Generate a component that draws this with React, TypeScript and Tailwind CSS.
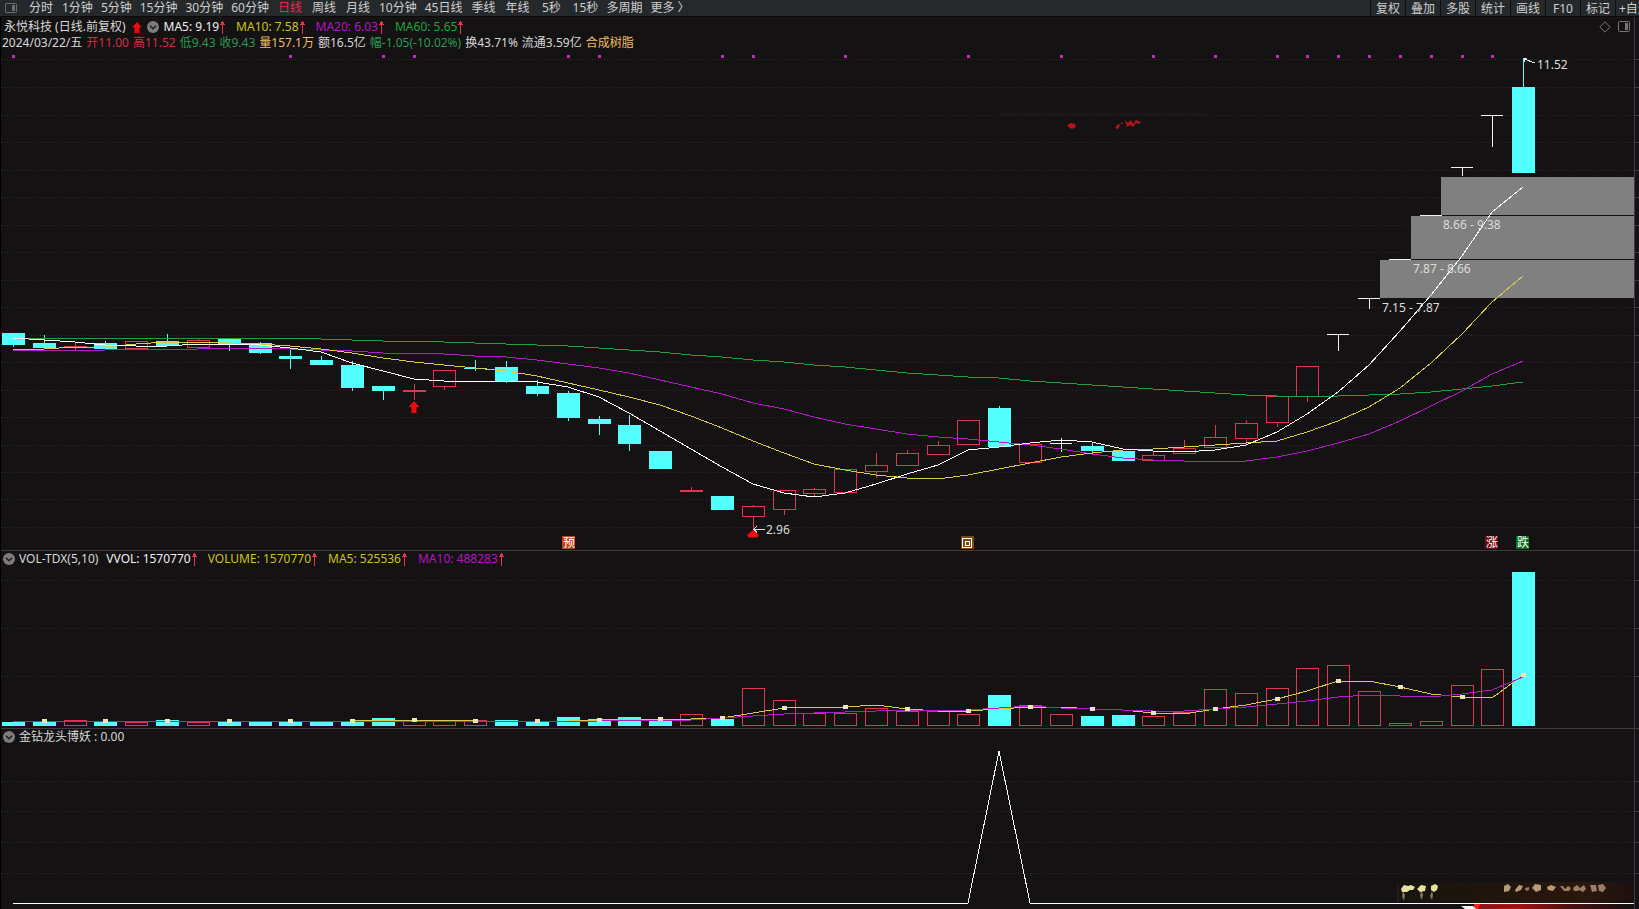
import React from 'react';
import clsx from 'clsx';

const PERIODS = [
  '分时', '1分钟', '5分钟', '15分钟', '30分钟', '60分钟', '日线', '周线', '月线',
  '10分钟', '45日线', '季线', '年线', '5秒', '15秒', '多周期', '更多 〉',
];

const TOOLS = ['复权', '叠加', '多股', '统计', '画线', 'F10', '标记'];

const QUOTE = [
  { text: '2024/03/22/五', color: 'text-[#d8d8d8]' },
  { text: '开11.00', color: 'text-[#d32f42]' },
  { text: '高11.52', color: 'text-[#d32f42]' },
  { text: '低9.43', color: 'text-[#2b9a52]' },
  { text: '收9.43', color: 'text-[#2b9a52]' },
  { text: '量157.1万', color: 'text-[#f0bd62]' },
  { text: '额16.5亿', color: 'text-[#d8d8d8]' },
  { text: '幅-1.05(-10.02%)', color: 'text-[#2b9a52]' },
  { text: '换43.71%', color: 'text-[#d8d8d8]' },
  { text: '流通3.59亿', color: 'text-[#d8d8d8]' },
  { text: '合成树脂', color: 'text-[#f0bd62]' },
];

const PRICE_MA = [
  { text: 'MA5: 9.19', color: 'text-[#f0f0f0]' },
  { text: 'MA10: 7.58', color: 'text-[#cdc31f]' },
  { text: 'MA20: 6.03', color: 'text-[#b514c2]' },
  { text: 'MA60: 5.65', color: 'text-[#1fa437]' },
];

const VOLUME_MA = [
  { text: 'VVOL: 1570770', color: 'text-[#f0f0f0]' },
  { text: 'VOLUME: 1570770', color: 'text-[#cdc31f]' },
  { text: 'MA5: 525536', color: 'text-[#cdc31f]' },
  { text: 'MA10: 488283', color: 'text-[#b514c2]' },
];

const CYAN = '#54ffff';
const RED = '#e0364f';
const WHITE = '#f2f2f2';
const YELLOW = '#d8cb4a';
const PURPLE = '#b41cc6';
const GREEN = '#22a03c';

// d = down (filled), u = up (hollow), c = flat cross, w = white flat, g = cyan flat
type Kind = 'd' | 'u' | 'c' | 'w' | 'g';
// kind, body top, body bottom, wick top, wick bottom, volume top
type Candle = [Kind, number, number, number, number, number];

const CANDLES: Candle[] = [
  ['d', 333, 345, 333, 347, 722],
  ['d', 343, 348, 335, 348, 722],
  ['c', 346, 347, 343, 350, 720],
  ['d', 343, 349, 341, 350, 722],
  ['u', 341, 349, 341, 349, 722],
  ['d', 341, 346, 334, 346, 720],
  ['u', 340, 348, 338, 348, 722],
  ['d', 338, 344, 338, 351, 722],
  ['d', 343, 353, 342, 354, 722],
  ['d', 356, 359, 349, 369, 721],
  ['d', 360, 365, 356, 365, 722],
  ['d', 365, 388, 361, 391, 721],
  ['d', 386, 391, 386, 400, 718],
  ['c', 390, 392, 384, 400, 721],
  ['u', 370, 387, 370, 390, 721],
  ['g', 368, 369, 360, 371, 720],
  ['d', 367, 382, 361, 383, 720],
  ['d', 386, 394, 380, 396, 722],
  ['d', 393, 418, 391, 421, 717],
  ['d', 419, 424, 416, 435, 719],
  ['d', 425, 444, 415, 451, 717],
  ['d', 451, 469, 451, 469, 719],
  ['c', 490, 492, 487, 492, 714],
  ['d', 496, 510, 496, 510, 719],
  ['u', 506, 517, 505, 530, 688],
  ['u', 490, 510, 490, 515, 700],
  ['u', 489, 494, 488, 497, 713],
  ['u', 469, 493, 469, 493, 713],
  ['u', 465, 472, 453, 478, 708],
  ['u', 453, 466, 450, 466, 711],
  ['u', 445, 455, 441, 455, 711],
  ['u', 420, 445, 420, 445, 714],
  ['d', 408, 447, 406, 447, 695],
  ['u', 444, 463, 444, 463, 705],
  ['w', 443, 444, 438, 452, 714],
  ['d', 446, 451, 443, 454, 716],
  ['d', 451, 461, 451, 461, 715],
  ['u', 455, 461, 452, 461, 716],
  ['u', 448, 454, 440, 454, 712],
  ['u', 437, 448, 425, 448, 689],
  ['u', 423, 439, 420, 445, 693],
  ['u', 396, 423, 396, 427, 688],
  ['u', 366, 397, 366, 402, 668],
  ['w', 334, 335, 334, 351, 665],
  ['w', 298, 299, 298, 309, 691],
  ['w', 259, 260, 259, 260, 723],
  ['w', 215, 216, 215, 216, 721],
  ['w', 167, 168, 167, 176, 685],
  ['w', 115, 116, 115, 147, 669],
  ['d', 87, 173, 58, 173, 572],
];

const MA5 = [
  338, 340, 342, 345, 346, 346, 344, 344, 345, 348, 352, 363, 371, 379, 381, 382, 381, 382, 387, 397,
  413, 431, 449, 467, 484, 493, 497, 493, 484, 474, 465, 450, 447, 443, 440, 442, 449, 451, 452, 450,
  445, 432, 414, 392, 365, 331, 295, 256, 212, 187,
];
const MA10 = [
  350, 349, 347, 347, 344, 342, 342, 343, 344, 346, 349, 353, 358, 362, 365, 368, 371, 376, 383, 390,
  397, 405, 416, 428, 441, 453, 464, 470, 475, 478, 479, 475, 469, 463, 457, 453, 450, 449, 447, 445,
  443, 441, 432, 421, 407, 388, 363, 334, 302, 276,
];
const MA20 = [
  350, 350, 350, 350, 349, 349, 349, 348, 348, 349, 350, 351, 353, 353, 354, 356, 357, 360, 364, 368,
  373, 380, 387, 394, 403, 409, 417, 424, 429, 434, 437, 439, 442, 445, 449, 454, 458, 460, 461, 462,
  461, 457, 451, 443, 434, 421, 406, 391, 374, 361,
];
const MA60 = [
  338, 338, 338, 338, 338, 338, 338, 338, 338, 338, 339, 340, 341, 341, 342, 343, 344, 345, 346, 348,
  350, 352, 355, 357, 360, 362, 365, 367, 370, 373, 375, 377, 378, 381, 383, 385, 387, 389, 391, 393,
  395, 396, 396, 396, 395, 394, 392, 389, 386, 382,
];
const VOL5 = [
  721, 721, 721, 721, 721, 721, 721, 721, 721, 721, 721, 721, 720, 720, 720, 721, 721, 721, 721, 720,
  719, 719, 719, 718, 713, 708, 707, 707, 705, 709, 711, 711, 709, 707, 707, 709, 710, 713, 714, 709,
  705, 699, 691, 681, 681, 687, 694, 697, 698, 675,
];
const VOL10 = [
  721, 721, 721, 721, 721, 721, 721, 721, 721, 721, 721, 721, 721, 721, 721, 721, 721, 721, 721, 721,
  720, 720, 720, 718, 716, 714, 713, 712, 711, 710, 710, 710, 708, 706, 708, 709, 710, 711, 711, 709,
  707, 704, 701, 697, 695, 696, 697, 694, 690, 677,
];

const EVENT_DAYS = [0, 9, 12, 13, 18, 19, 23, 24, 27, 31, 34, 37, 39, 41, 42, 43, 44, 45, 46, 47, 48];

const PRICE_GRID = [59, 87, 115, 142, 170, 197, 225, 252, 280, 307, 335, 362, 390, 417, 445, 472, 499, 527];
const VOLUME_GRID = [580, 628, 676];
const SIGNAL_GRID = [781, 811, 842, 873];

const ZONES = [
  { x: 1380, y: 260, h: 38, label: '7.15 - 7.87' },
  { x: 1411, y: 216, h: 43, label: '7.87 - 8.66' },
  { x: 1441, y: 177, h: 38, label: '8.66 - 9.38' },
];

const BADGES = [
  { x: 562, text: '预', fill: '#b34a1a' },
  { x: 1485, text: '涨', fill: '#6e0c12' },
  { x: 1516, text: '跌', fill: '#0b6e1c' },
];

const px = (i: number) => Math.round(13 + i * 30.82);
const toPoints = (ys: number[]) => ys.map((y, i) => `${px(i)},${y}`).join(' ');

const UpArrow = () => (
  <svg viewBox="0 0 7 14" className="h-[14px] w-[7px] shrink-0" fill={RED} aria-hidden="true">
    <path d="M3 1h1v13H3zM2 2h3v2H2zM1 4h5v1H1z" shapeRendering="crispEdges" />
  </svg>
);

const CollapseButton: React.FC<{ label: string }> = ({ label }) => (
  <button type="button" aria-label={label} className="shrink-0">
    <svg viewBox="0 0 12 12" className="block h-3 w-3">
      <circle cx="6" cy="6" r="6" fill="#7c7c7c" />
      <path d="M3 4.8 6 7.8 9 4.8" fill="none" stroke="#1c1c1c" strokeWidth="1.4" />
    </svg>
  </button>
);

const Values: React.FC<{ items: { text: string; color: string }[] }> = ({ items }) => (
  <div className="flex items-center gap-[10px]">
    {items.map((item) => (
      <span key={item.text} className={clsx('flex items-center', item.color)}>
        {item.text}
        <UpArrow />
      </span>
    ))}
  </div>
);

const Grid: React.FC<{ rows: number[] }> = ({ rows }) => (
  <g stroke="#2b2a2c" strokeDasharray="1 2">
    {rows.map((y) => (
      <line key={y} x1="1" x2="1634" y1={y + 0.5} y2={y + 0.5} />
    ))}
  </g>
);

const Line: React.FC<{ ys: number[]; color: string }> = ({ ys, color }) => (
  <polyline points={toPoints(ys)} fill="none" stroke={color} />
);

const CandleMark: React.FC<{ x: number; candle: Candle }> = ({ x, candle }) => {
  const [kind, top, bottom, high, low] = candle;
  if (kind === 'u') {
    return (
      <g fill="none" stroke={RED}>
        <rect x={x - 10.5} y={top + 0.5} width="22" height={bottom - top - 1} />
        <path d={`M${x + 0.5} ${high}V${top}M${x + 0.5} ${bottom}V${low}`} />
      </g>
    );
  }
  const fill = kind === 'c' ? RED : kind === 'w' ? WHITE : CYAN;
  return (
    <g fill={fill}>
      <rect x={x - 11} y={top} width={kind === 'w' ? 22 : 23} height={bottom - top} />
      <rect x={x} y={high} width="1" height={low - high} />
    </g>
  );
};

const PriceChart = () => (
  <svg viewBox="1 50 1633 500" className="block h-auto w-full" shapeRendering="crispEdges" fontSize="12">
    <Grid rows={PRICE_GRID} />
    {EVENT_DAYS.map((i) => (
      <rect key={i} x={px(i) - 1} y="55" width="3" height="3" fill="#c02cc0" />
    ))}

    {ZONES.map((zone) => (
      <rect key={zone.label} x={zone.x} y={zone.y} width={1634 - zone.x} height={zone.h} fill="#808080" />
    ))}

    {CANDLES.map((candle, i) => (
      <CandleMark key={i} x={px(i)} candle={candle} />
    ))}
    <Line ys={MA60} color={GREEN} />
    <Line ys={MA20} color={PURPLE} />
    <Line ys={MA10} color={YELLOW} />
    <Line ys={MA5} color="#ffffff" />

    <g fill="#dcdcdc">
      {ZONES.map((zone) => (
        <text key={zone.label} x={zone.x + 2} y={zone.y + zone.h + 14}>
          {zone.label}
        </text>
      ))}
      <text x="1537" y="69">11.52</text>
      <text x="766" y="534">2.96</text>
    </g>
    <path d="M1524 62V58h3M1524 59l11 4" fill="none" stroke="#d8e8e8" />
    <path d="M754 529.500h11M757 526l-3 3.500 3 3" fill="none" stroke="#dcdcdc" />

    {/* buy signals */}
    <g fill="#f00a0a" shapeRendering="auto">
      <path d="M414 401l5.500 6H416.500v6h-5v-6H408.500z" />
      <path d="M753 530l6 5-1.500 2.500h-9L747 535z" />
    </g>

    {BADGES.map((badge) => (
      <g key={badge.text}>
        <rect x={badge.x} y="536" width="13" height="13" fill={badge.fill} />
        <text x={badge.x + 1} y="547" fill="#ffffff" fontSize="12">
          {badge.text}
        </text>
      </g>
    ))}
    <rect x="961" y="536" width="13" height="13" fill="#7a4a12" />
    <g fill="none" stroke="#ffffff">
      <rect x="962.500" y="538.500" width="9" height="9" />
      <rect x="965.500" y="541.500" width="4" height="4" />
    </g>

    <g shapeRendering="auto">
      <path d="M1000 113.500H1206" stroke="#1e1c1e" />
      <path d="M1067 126l3-3 5 1 1 3-4 2zM1115 128l3-4 2 1-2 4zM1120 124l2-2 1 2zM1125 120l3 3 3-3 2 4 3-4 5 2-2 2-3-1-3 4-3-2-3 2z" fill="#b51420" />
    </g>
  </svg>
);

const VolumeChart = () => (
  <svg viewBox="1 567 1633 161" className="block h-auto w-full" shapeRendering="crispEdges">
    <Grid rows={VOLUME_GRID} />
    {CANDLES.map(([kind, , , , , top], i) =>
      kind === 'd' ? (
        <rect key={i} x={px(i) - 11} y={top} width="23" height={726 - top} fill={CYAN} />
      ) : (
        <rect key={i} x={px(i) - 10.5} y={top + 0.5} width="22" height={725 - top} fill="none" stroke={RED} />
      ),
    )}
    <Line ys={VOL5} color={YELLOW} />
    <Line ys={VOL10} color={PURPLE} />
    {VOL5.map((y, i) =>
      i % 2 === 1 ? <rect key={i} x={px(i) - 2} y={y - 2} width="5" height="4" fill="#eee6c0" /> : null,
    )}
  </svg>
);

const SignalChart = () => (
  <svg viewBox="1 745 1633 164" className="block h-auto w-full" shapeRendering="crispEdges">
    <defs>
      <linearGradient id="ticker">
        <stop offset="0" stopColor="#17140f" />
        <stop offset="0.3" stopColor="#1d150d" />
        <stop offset="0.8" stopColor="#2b170d" />
        <stop offset="1" stopColor="#1c1010" />
      </linearGradient>
      <linearGradient id="glow">
        <stop offset="0" stopColor="#ff2020" />
        <stop offset="0.15" stopColor="#c81414" />
        <stop offset="0.6" stopColor="#4a1010" />
        <stop offset="1" stopColor="#141213" />
      </linearGradient>
    </defs>
    <Grid rows={SIGNAL_GRID} />
    <g shapeRendering="auto">
      <rect x="1397" y="882" width="237" height="21" fill="url(#ticker)" />
      <path d="M1398 884v19" stroke="#4a1c22" />
      <g fill="#e8e2a0">
        <path d="M1401 889l3-4 4 1 3-1 4 2-2 3-3 0-3 2-5 0zM1418 888l3-3 5 1-1 5-5 1-3-3zM1431 886l4-2 3 2-1 4-3 2-3-2z" />
        <path d="M1403 891l2 4-1 6-2-5zM1421 891l2 3-1 6-2-4zM1432 891l1 4-1 5-2-4z" opacity="0.5" />
      </g>
      <g fill="#b89a78">
        <path d="M1504 886l4-2 3 3-2 4-5 1zM1515 890l4-5 4 1-2 4-5 2zM1532 888l3-4 6 1 0 5-5 2zM1547 887l4-2 5 2-3 4-5-1z" />
        <path d="M1525 888l4-1 0 3-3 1zM1560 886l3 0 2 3 3-3 3 2-2 3-5 0zM1573 888l4-3 3 3-2 3-4 0zM1580 888l4-3 2 4-3 3-4-2zM1590 885l6 0 1 6-5 1zM1598 885l5-1 3 4-3 4-4-1z" opacity="0.8" />
      </g>
      <rect x="1474" y="904" width="160" height="5" fill="url(#glow)" />
      <path d="M1461 906l12 0 3 3-11 0z" fill="#f4f4f4" />
      <path d="M1480 904l50 2-36 3h-16z" fill="#8c1616" />
    </g>
    <polyline points="13,903 968,903 999,751 1030,903 1634,903" fill="none" stroke="#ffffff" />
  </svg>
);

export default function App() {
  return (
    <div className="flex min-h-screen flex-col overflow-hidden bg-[#141213] font-['Noto_Sans','Noto_Sans_CJK_SC',sans-serif] text-[12px] leading-[16px] whitespace-nowrap text-[#d8d8d8]">
      <nav className="flex h-[17px] items-start justify-between border-b border-[#0a0a0a] bg-[#26292c] leading-[15px] text-[#cfcfcf]">
        <div className="flex">
          <button type="button" aria-label="侧栏" className="w-6 pl-[5px]">
            <svg viewBox="0 0 12 12" className="block h-3 w-3" fill="none" stroke="#6b6e70">
              <rect x="0.500" y="1.500" width="11" height="9" rx="1" />
              <rect x="7" y="3" width="3" height="6" fill="#6b6e70" stroke="none" />
            </svg>
          </button>
          {PERIODS.map((period) => (
            <button
              key={period}
              type="button"
              className={clsx('min-w-[34px] px-1', period === '日线' && 'text-[#e0304a]')}
            >
              {period}
            </button>
          ))}
        </div>
        <div className="flex shrink-0">
          {TOOLS.map((tool) => (
            <button key={tool} type="button" className="h-4 w-[35px] border-l border-[#0e0f10]">
              {tool}
            </button>
          ))}
          <button type="button" className="h-4 w-6 overflow-hidden border-l border-[#0e0f10] pl-[3px] text-left">
            +自选
          </button>
        </div>
      </nav>

      <main className="flex flex-1 border-l border-black">
        <div className="min-w-0 flex-1">
          <section>
            <header className="h-[33px] pt-0.5">
              <div className="flex h-4 items-center justify-between pr-1 pl-[3px]">
                <div className="flex items-center gap-[5px]">
                  <h1 className="pr-px">永悦科技 (日线.前复权)</h1>
                  <svg viewBox="0 0 10 11" className="h-[11px] w-[10px]" fill="#f00a0a" aria-hidden="true">
                    <path d="M5 0l5 5.500H7.500V11h-5V5.500H0z" />
                  </svg>
                  <CollapseButton label="收起主图指标" />
                  <Values items={PRICE_MA} />
                </div>
                <div className="flex items-center gap-[7px]">
                  <button type="button" aria-label="标记点">
                    <svg viewBox="0 0 12 12" className="block h-3 w-3" fill="none" stroke="#777">
                      <path d="M6 0.800 11.200 6 6 11.200 0.800 6z" />
                    </svg>
                  </button>
                  <button type="button" aria-label="右侧栏">
                    <svg viewBox="0 0 12 12" className="block h-3 w-3" fill="none" stroke="#777">
                      <rect x="0.500" y="0.500" width="11" height="10" rx="1" />
                      <rect x="7" y="2" width="3" height="7" fill="#777" stroke="none" />
                    </svg>
                  </button>
                </div>
              </div>
              <div className="flex h-4 items-center gap-1 pl-px">
                {QUOTE.map((item) => (
                  <span key={item.text} className={item.color}>
                    {item.text}
                  </span>
                ))}
              </div>
            </header>
            <PriceChart />
          </section>

          <section className="border-t border-[#3c3c3e]">
            <header className="flex h-4 items-center gap-1 pl-[2px]">
              <CollapseButton label="收起成交量" />
              <h2 className="pr-1">VOL-TDX(5,10)</h2>
              <Values items={VOLUME_MA} />
            </header>
            <VolumeChart />
          </section>

          <section className="border-t border-[#3c3c3e]">
            <header className="flex h-4 items-center gap-1 pl-[2px]">
              <CollapseButton label="收起金钻龙头博妖" />
              <h2>金钻龙头博妖 : 0.00</h2>
            </header>
            <SignalChart />
          </section>
        </div>

        <aside className="w-[5px] border-l border-[#3a3b40]">
          <svg viewBox="0 17 4 892" className="block h-auto w-full" stroke="#3a3b40" shapeRendering="crispEdges">
            {[...PRICE_GRID, ...VOLUME_GRID, ...SIGNAL_GRID, 550, 728].map((y) => (
              <path key={y} d={`M0 ${y + 0.5}h4`} />
            ))}
          </svg>
        </aside>
      </main>
    </div>
  );
}
